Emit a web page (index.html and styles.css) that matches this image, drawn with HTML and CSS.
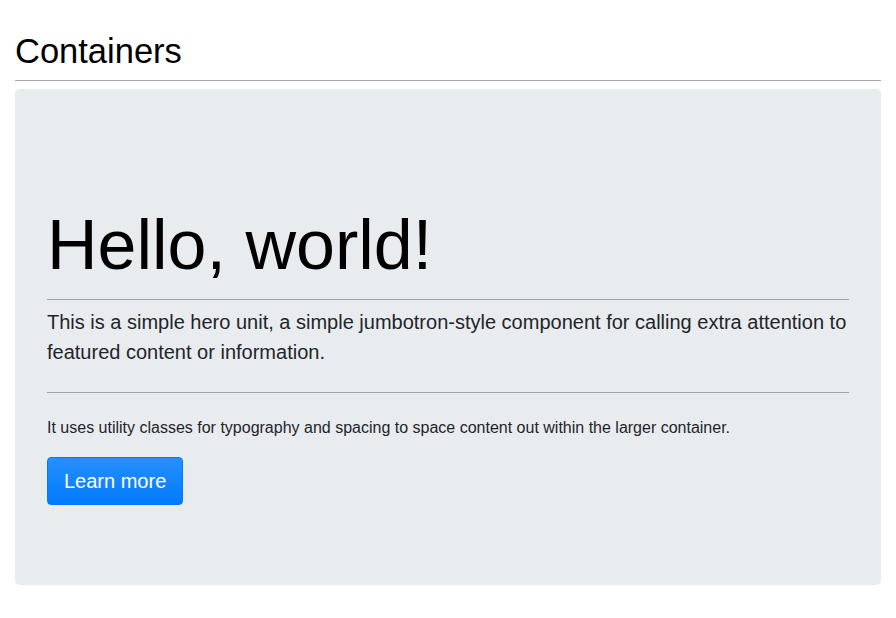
FILE: index.html
```html
<!DOCTYPE html>
<html lang="en">
<head>
<meta charset="utf-8">
<title>Containers</title>
<link rel="stylesheet" href="styles.css">
</head>
<body>
<main class="page">
  <h2 class="section-title">Containers</h2>
  <div class="jumbotron">
    <h1 class="display">Hello, world!</h1>
    <hr class="rule rule-first">
    <p class="lead">This is a simple hero unit, a simple jumbotron-style component for calling extra attention to featured content or information.</p>
    <hr class="rule rule-second">
    <p class="body-text">It uses utility classes for typography and spacing to space content out within the larger container.</p>
    <p class="actions"><a class="btn-primary" href="#" role="button">Learn more</a></p>
  </div>
</main>
</body>
</html>
```

FILE: styles.css
```css
html, body {
  margin: 0;
  padding: 0;
  background: #ffffff;
}

body {
  font-family: "Liberation Sans", Arial, sans-serif;
  color: #212529;
  font-size: 16px;
  line-height: 1.5;
}

.page {
  padding: 30px 15px 0 15px;
}

.section-title {
  margin: 0 0 8px 0;
  font-size: 34.5px;
  font-weight: 400;
  line-height: 42px;
  color: #000000;
  padding-bottom: 8px;
  border-bottom: 1px solid #a2a6aa;
}

.jumbotron {
  background: #e9ecef;
  border-radius: 5px;
  padding: 114px 32px 64px 32px;
}

.display {
  margin: 0;
  font-size: 70px;
  font-weight: 400;
  line-height: 84px;
  color: #000000;
}

.rule {
  border: 0;
  border-top: 1px solid #a0a2a4;
  margin: 0;
  height: 0;
}

.rule-first {
  margin-top: 12px;
  margin-bottom: 7px;
}

.rule-second {
  margin-top: 25px;
  margin-bottom: 23px;
}

.lead {
  margin: 0;
  font-size: 20px;
  line-height: 30px;
  font-weight: 400;
}

.body-text {
  margin: 0 0 17px 0;
  font-size: 16px;
  line-height: 24px;
}

.actions {
  margin: 0 0 16px 0;
}

.btn-primary {
  display: inline-block;
  font-size: 20px;
  line-height: 30px;
  padding: 8px 16px;
  color: #ffffff;
  text-decoration: none;
  border: 1px solid #007bff;
  border-radius: 4px;
  background: linear-gradient(180deg, #268fff, #007bff);
}
```
